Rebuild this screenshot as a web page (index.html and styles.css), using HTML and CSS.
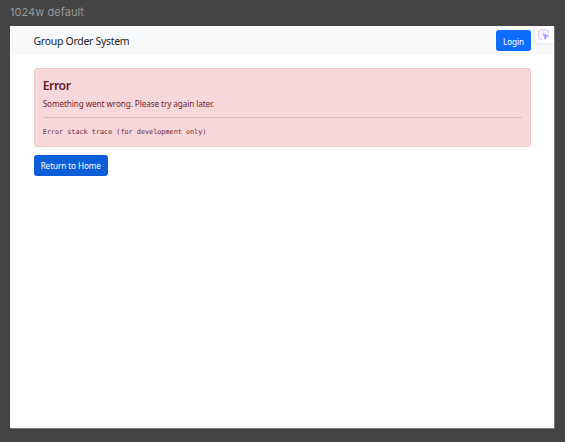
FILE: index.html
```html
<!DOCTYPE html>
<html lang="en">
<head>
<meta charset="utf-8">
<title>Group Order System</title>
<link rel="stylesheet" href="styles.css">
</head>
<body>
<div class="frame-label">1024w default</div>
<div class="frame">
  <header class="navbar">
    <span class="brand">Group Order System</span>
    <button class="btn login">Login</button>
  </header>
  <main class="content">
    <section class="alert">
      <h1 class="alert-title">Error</h1>
      <p class="alert-text">Something went wrong. Please try again later.</p>
      <hr class="divider">
      <pre class="trace">Error stack trace (for development only)</pre>
    </section>
    <button class="btn home">Return to Home</button>
  </main>
  <div class="badge">
    <svg width="12" height="12" viewBox="0 0 12 12" fill="none">
      <path d="M4.5 10.4H3.4A2.7 2.7 0 0 1 .7 7.7V3.4A2.7 2.7 0 0 1 3.4.7h4.2a2.7 2.7 0 0 1 2.7 2.7v1" stroke="#c6bcfa" stroke-width="1"/>
      <path d="M3.5 7.4A2.8 2.8 0 1 1 7.8 4" stroke="#e2ddfd" stroke-width=".7"/>
      <path d="M4.8 4.6 11 6.9 8.5 8 7.3 10.7Z" fill="#a99af5" stroke="#a99af5" stroke-width=".6" stroke-linejoin="round"/>
    </svg>
  </div>
</div>
</body>
</html>
```
FILE: styles.css
```css
* { box-sizing: border-box; }
body {
  margin: 0;
  height: 442px;
  padding: 0 10px;
  overflow: hidden;
  background: #444;
  font-family: "Noto Sans", sans-serif;
}
.frame-label {
  height: 26px;
  padding-top: 5px;
  font: 11px/15px Inter, sans-serif;
  letter-spacing: .05px;
  color: #999;
}
.frame {
  position: relative;
  width: 544px;
  height: 402px;
  background: #fff;
  box-shadow: 1px 1px 0 #777;
}
.navbar {
  display: flex;
  align-items: center;
  justify-content: space-between;
  height: 29px;
  padding: 0 23px 0 23.5px;
  background: #f8f9fa;
}
.brand {
  font-size: 10.5px;
  line-height: 16px;
  letter-spacing: -.3px;
  padding-top: 1px;
  color: #1c1f22;
  white-space: nowrap;
}
.btn {
  display: flex;
  align-items: center;
  justify-content: center;
  height: 20.5px;
  padding: 1px 0 0;
  border: 0;
  border-radius: 3px;
  font: 8.2px/12px "Noto Sans", sans-serif;
  letter-spacing: -.1px;
  color: #fff;
  white-space: nowrap;
}
.login { width: 35px; height: 21px; padding-top: 2px; background: #0d6efd; }
.home { width: 74.5px; margin-top: 8px; background: #0b5ed7; }
.content { padding: 13px 23px 0 23.5px; }
.alert {
  height: 79px;
  padding: 9px 8px 0 8.2px;
  border: 1px solid #f4c8cd;
  border-radius: 3px;
  background: #f6d7da;
  color: #6d2530;
}
.alert-title {
  margin: 0;
  font-size: 12.2px;
  font-weight: 600;
  line-height: 16px;
  letter-spacing: -.4px;
  color: #621b26;
}
.alert-text {
  margin: 4px 0 0;
  font-size: 8.2px;
  line-height: 12px;
  letter-spacing: -.1px;
}
.divider {
  height: 1px;
  margin: 7px 0 8px;
  border: 0;
  background: #dcb8bd;
}
.trace {
  margin: 0;
  padding-top: 1px;
  font: 6.8px/11px "DejaVu Sans Mono", monospace;
}
.badge {
  position: absolute;
  top: 0;
  right: 0;
  display: flex;
  align-items: center;
  justify-content: center;
  width: 19px;
  height: 17px;
  padding-right: 2px;
  border-bottom-left-radius: 3px;
  background: #fff;
  box-shadow: -1px 1px 3px rgba(0, 0, 0, .08);
}
```
